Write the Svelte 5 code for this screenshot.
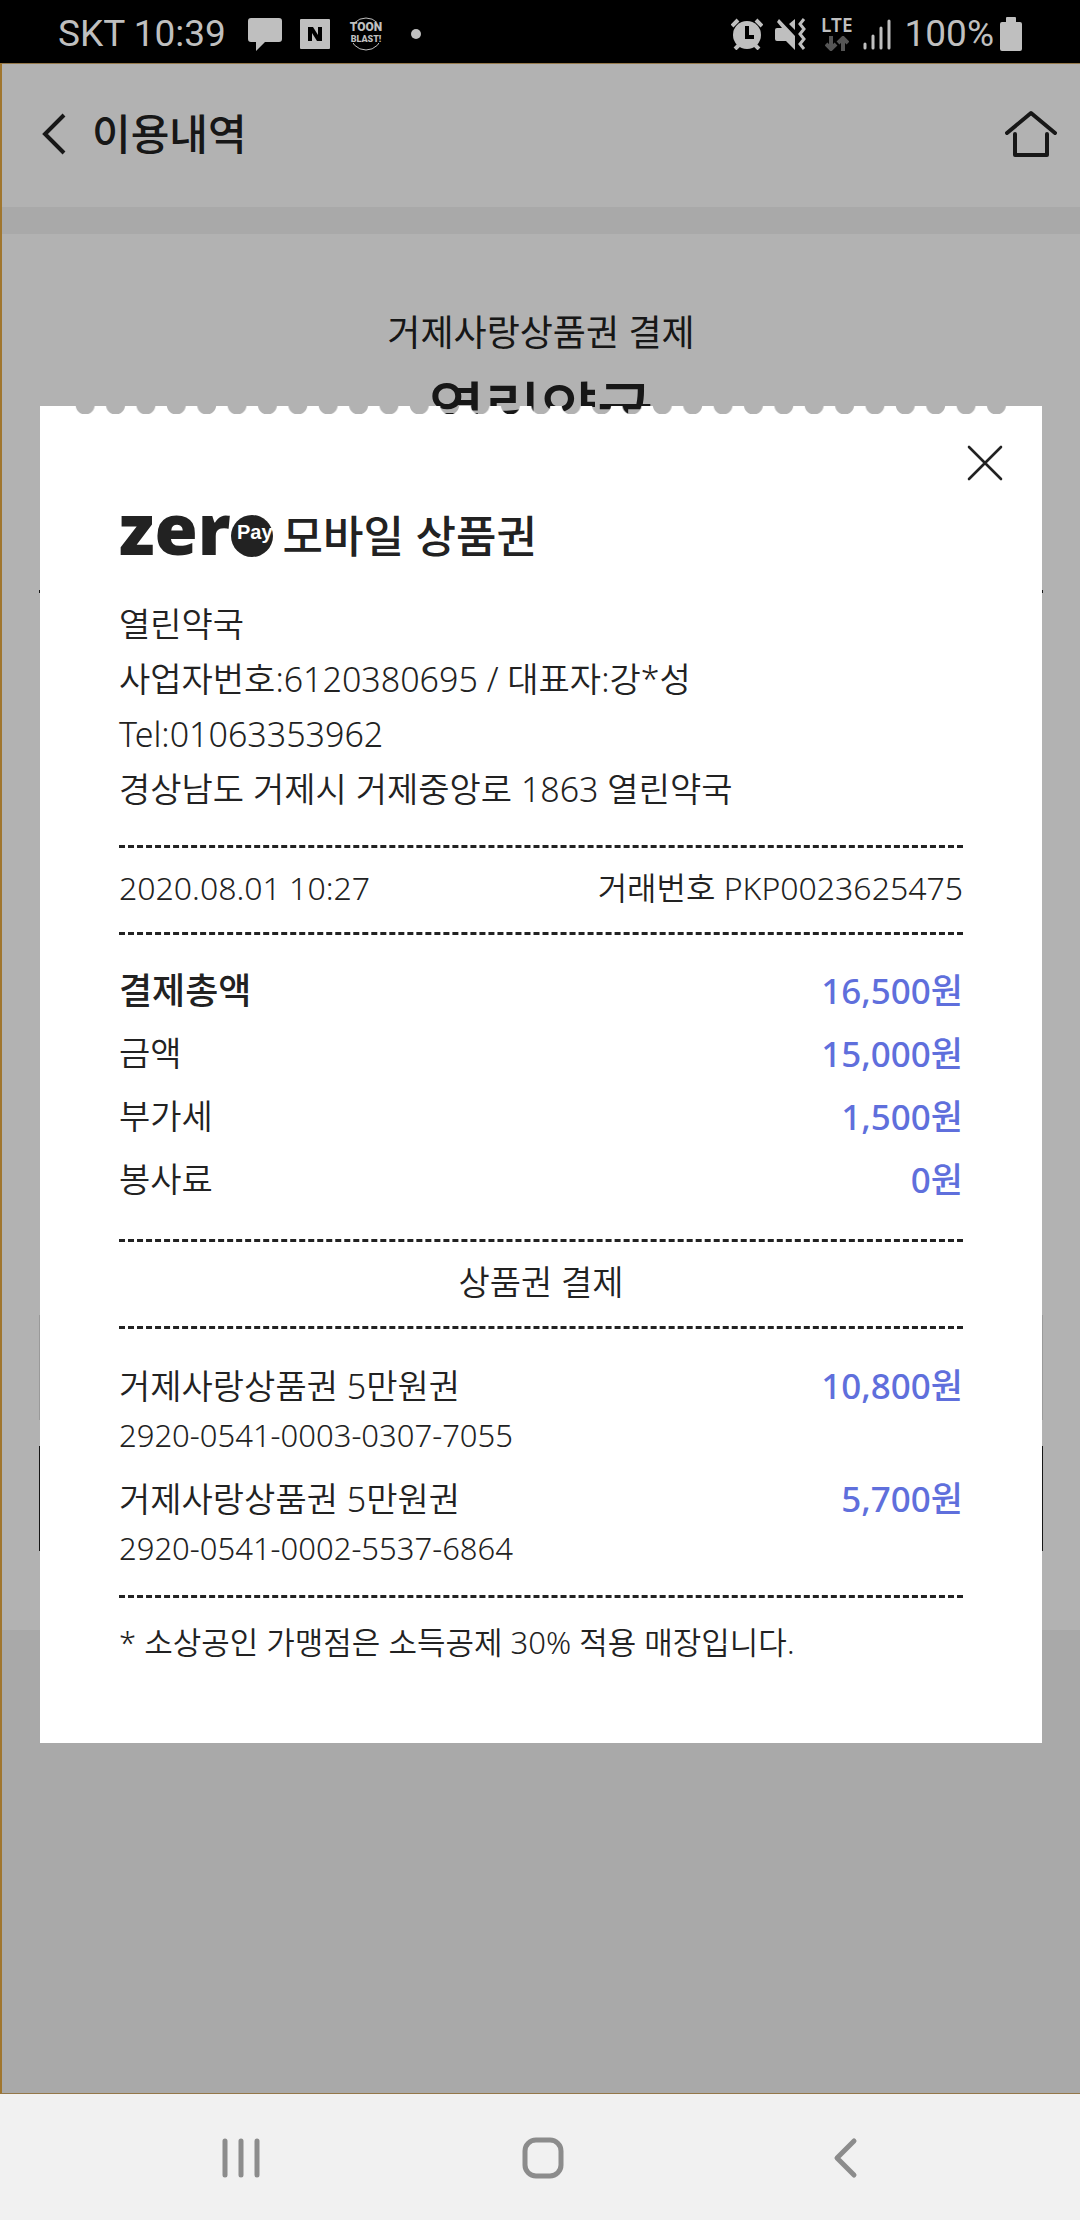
<script lang="ts">
  type Row = { label: string; amount: string; strong?: boolean };
  type Voucher = { name: string; code: string; amount: string };

  const shop = [
    '열린약국',
    '사업자번호:6120380695 / 대표자:강*성',
    'Tel:01063353962',
    '경상남도 거제시 거제중앙로 1863 열린약국'
  ];

  const rows: Row[] = [
    { label: '결제총액', amount: '16,500원', strong: true },
    { label: '금액', amount: '15,000원' },
    { label: '부가세', amount: '1,500원' },
    { label: '봉사료', amount: '0원' }
  ];

  const vouchers: Voucher[] = [
    { name: '거제사랑상품권 5만원권', code: '2920-0541-0003-0307-7055', amount: '10,800원' },
    { name: '거제사랑상품권 5만원권', code: '2920-0541-0002-5537-6864', amount: '5,700원' }
  ];

  let open = $state(true);
</script>

<div class="phone">
  <div class="status">
    <div class="status-side">
      <span class="status-text">SKT 10:39</span>
      <svg class="bubble" width="34" height="34" viewBox="0 0 34 34" aria-hidden="true">
        <path d="M3 1h28a3 3 0 0 1 3 3v18a3 3 0 0 1-3 3H17l-9 9v-9H3a3 3 0 0 1-3-3V4a3 3 0 0 1 3-3z" fill="currentColor" />
      </svg>
      <svg class="note" width="30" height="30" viewBox="0 0 30 30" aria-hidden="true">
        <rect width="30" height="30" rx="1" fill="currentColor" />
        <path d="M8 22V8h5l5 8V8h4v14h-5l-5-8v8z" fill="#000" />
      </svg>
      <svg class="toon" width="36" height="34" viewBox="0 0 36 34" aria-hidden="true">
        <circle cx="18" cy="17" r="16" fill="none" stroke="currentColor" />
        <rect x="0" y="5" width="36" height="21" fill="#000" />
        <text x="18" y="14" text-anchor="middle" font-size="12">TOON</text>
        <text x="18" y="25" text-anchor="middle" font-size="9">BLAST!</text>
      </svg>
      <span class="more"></span>
    </div>
    <div class="status-side">
      <svg width="32" height="32" viewBox="0 0 32 32" aria-hidden="true">
        <g stroke="currentColor" stroke-width="4" fill="none">
          <path d="M1 8l6-6M31 8l-6-6M4 31l5-5M28 31l-5-5" />
        </g>
        <circle cx="16" cy="17" r="14" fill="currentColor" />
        <path d="M16 8v11h7" fill="none" stroke="#000" stroke-width="4" />
      </svg>
      <svg class="mute" width="32" height="32" viewBox="0 0 32 32" aria-hidden="true">
        <path d="M0 12q0-2 2-2h5L2 4l2-3 16 17v14l-9-9H2q-2 0-2-2zM20 1v11l-6-6z" fill="currentColor" />
        <path d="M29 1l-4 5 4 5-4 5 4 5-4 5 4 5" fill="none" stroke="currentColor" stroke-width="3" />
      </svg>
      <span class="lte">
        LTE
        <svg width="24" height="15" viewBox="0 0 24 15" aria-hidden="true">
          <path d="M6 0v12M1 8l5 5 5-5M18 15V3M13 7l5-5 5 5" fill="none" stroke="#555" stroke-width="4" />
        </svg>
      </span>
      <svg class="signal" width="28" height="32" viewBox="0 0 28 32" aria-hidden="true">
        <path d="M2 26v4M10 18v12M18 10v20M26 3v27" stroke="currentColor" stroke-width="3" stroke-linecap="round" />
      </svg>
      <span class="status-text">100%</span>
      <svg class="battery" width="22" height="34" viewBox="0 0 22 34" aria-hidden="true">
        <path d="M7 0h8q1 0 1 1v4h4q2 0 2 2v25q0 2-2 2H2q-2 0-2-2V7q0-2 2-2h4V1q0-1 1-1z" fill="currentColor" />
      </svg>
    </div>
  </div>

  <div class="app">
    <div class="page">
      <header>
        <button type="button" aria-label="뒤로">
          <svg width="24" height="42" viewBox="0 0 24 42" aria-hidden="true">
            <path d="M22 2L3 21l19 19" fill="none" stroke="currentColor" stroke-width="4" />
          </svg>
        </button>
        <h1>이용내역</h1>
        <button type="button" aria-label="홈">
          <svg width="52" height="48" viewBox="0 0 52 48" aria-hidden="true">
            <path d="M2 23L26 3l24 20M10 24v21h32V24" fill="none" stroke="currentColor" stroke-width="4" stroke-linecap="round" stroke-linejoin="round" />
          </svg>
        </button>
      </header>
      <section class="history">
        <p>거제사랑상품권 결제</p>
        <h2>열린약국</h2>
        <div class="detail"></div>
        <div class="box light"></div>
        <div class="box"></div>
      </section>
    </div>

    {#if open}
      <div class="overlay">
        <div class="receipt" role="dialog" aria-modal="true" aria-label="모바일 상품권">
          <div class="edge"><span></span></div>
          <div class="close">
            <button type="button" aria-label="닫기" onclick={() => (open = false)}>
              <svg width="36" height="36" viewBox="0 0 36 36" aria-hidden="true">
                <path d="M2 2l32 32M34 2L2 34" fill="none" stroke="currentColor" stroke-width="2.6" stroke-linecap="round" />
              </svg>
            </button>
          </div>

          <div class="body">
            <h2 class="logo">
              <span class="zer">zer</span>
              <span class="pay">Pay</span>
              <span class="name">모바일 상품권</span>
            </h2>

            <div class="shop">
              {#each shop as line}
                <p>{line}</p>
              {/each}
            </div>

            <div class="strip meta">
              <span>2020.08.01 10:27</span>
              <span>거래번호 PKP0023625475</span>
            </div>

            <dl class="totals">
              {#each rows as row}
                <div class="row">
                  <dt class:strong={row.strong}>{row.label}</dt>
                  <dd>{row.amount}</dd>
                </div>
              {/each}
            </dl>

            <h3 class="strip">상품권 결제</h3>

            <ul class="vouchers">
              {#each vouchers as voucher}
                <li>
                  <div class="row">
                    <span>{voucher.name}</span>
                    <span class="amount">{voucher.amount}</span>
                  </div>
                  <p>{voucher.code}</p>
                </li>
              {/each}
            </ul>

            <p class="notice">* 소상공인 가맹점은 소득공제 30% 적용 매장입니다.</p>
          </div>
        </div>
      </div>
    {/if}
  </div>

  <nav>
    <button type="button" aria-label="최근 앱">
      <svg width="40" height="42" viewBox="0 0 40 42" aria-hidden="true">
        <path d="M4 4v34M20 4v34M36 4v34" stroke="currentColor" stroke-width="5" stroke-linecap="round" />
      </svg>
    </button>
    <button type="button" aria-label="홈 화면">
      <svg width="42" height="42" viewBox="0 0 42 42" aria-hidden="true">
        <rect x="3" y="3" width="36" height="36" rx="11" fill="none" stroke="currentColor" stroke-width="5" />
      </svg>
    </button>
    <button type="button" aria-label="이전">
      <svg width="26" height="42" viewBox="0 0 26 42" aria-hidden="true">
        <path d="M22 4L5 21l17 17" fill="none" stroke="currentColor" stroke-width="5" stroke-linecap="round" stroke-linejoin="round" />
      </svg>
    </button>
  </nav>
</div>

<style>
  :global(body) {
    margin: 0;
  }

  .phone {
    display: flex;
    flex-direction: column;
    min-height: 100vh;
    font-family: "Noto Sans", "Noto Sans CJK KR", sans-serif;
    font-weight: 350;
    color: #222;
  }

  h1, h2, h3, p, dl, dd, ul {
    margin: 0;
    padding: 0;
  }

  ul {
    list-style: none;
  }

  button {
    display: flex;
    padding: 0;
    border: none;
    background: none;
    color: inherit;
    cursor: pointer;
  }

  svg {
    display: block;
    flex-shrink: 0;
  }

  .status {
    display: flex;
    justify-content: space-between;
    box-sizing: border-box;
    height: 63px;
    padding: 4px 58px 0;
    background: #000;
    color: #bfbfbf;
  }

  .status-side {
    display: flex;
    align-items: center;
  }

  .status-text {
    font: 400 37px/60px Roboto, sans-serif;
  }

  .bubble {
    margin-left: 22px;
  }

  .note,
  .toon {
    margin-left: 18px;
  }

  .toon text {
    fill: currentColor;
    font-family: Roboto, sans-serif;
    font-weight: 900;
  }

  .more {
    width: 10px;
    height: 10px;
    margin-left: 27px;
    border-radius: 50%;
    background: currentColor;
  }

  .mute {
    margin-left: 12px;
  }

  .lte {
    display: flex;
    flex-direction: column;
    align-items: center;
    gap: 3px;
    margin-left: 14px;
    font-size: 19px;
    font-weight: 600;
    line-height: 16px;
  }

  .signal {
    margin: 0 14px 0 10px;
  }

  .battery {
    margin-left: 6px;
  }

  .app {
    flex: 1;
    display: grid;
    border: 1px solid #94784a;
    border-width: 1px 0 1px 2px;
    border-left-color: #a0762e;
    background: #f3f3f3;
  }

  .page,
  .overlay {
    grid-area: 1 / 1;
  }

  header {
    display: flex;
    align-items: center;
    height: 139px;
    padding: 0 23px 4px 40px;
    border-bottom: 27px solid #f3f3f3;
    background: #fff;
  }

  h1 {
    flex: 1;
    margin-left: 26px;
    font-size: 42px;
    font-weight: 500;
    line-height: 60px;
  }

  .history {
    display: flex;
    flex-direction: column;
    padding: 74px 37px 79px;
    background: #fff;
    text-align: center;
  }

  .history p {
    font-size: 36px;
    font-weight: 400;
    line-height: 50px;
  }

  .history h2 {
    margin-top: 12px;
    font-size: 61px;
    font-weight: 500;
    line-height: 80px;
  }

  .detail {
    min-height: 722px;
    margin-top: 140px;
    border-top: 3px solid #222;
  }

  .box {
    height: 103px;
    border: 1px solid #222;
  }

  .box.light {
    margin-bottom: 26px;
    border-color: #ddd;
  }

  .overlay {
    padding: 342px 38px 64px;
    background: rgba(0, 0, 0, 0.3);
  }

  .edge {
    display: flex;
    height: 8px;
    padding: 0 30px;
    background: linear-gradient(#fff, #fff) left / 30px 8px no-repeat, linear-gradient(#fff, #fff) right / 30px 8px no-repeat;
  }

  .edge span {
    flex: 1;
    background: #fff;
    -webkit-mask: radial-gradient(circle at 50% -1px, transparent 9px, #000 10px) left top / 30px 8px round;
    mask: radial-gradient(circle at 50% -1px, transparent 9px, #000 10px) left top / 30px 8px round;
  }

  .close {
    display: flex;
    justify-content: flex-end;
    padding: 31px 39px 0;
    background: #fff;
  }

  .body {
    padding: 12px 79px 78px;
    background: #fff;
  }

  .logo {
    display: flex;
    align-items: flex-end;
    line-height: 70px;
  }

  .zer {
    font-family: "Open Sans", sans-serif;
    font-size: 70px;
    font-weight: 800;
  }

  .pay {
    width: 42px;
    height: 42px;
    margin-bottom: 6px;
    border-radius: 50%;
    background: #222;
    color: #fff;
    font: 700 20px/34px "Liberation Sans", sans-serif;
    text-align: right;
  }

  .name {
    margin-left: 10px;
    font-size: 44px;
    font-weight: 500;
    line-height: 54px;
  }

  .shop {
    padding: 34px 0 28px;
    font-size: 34px;
    line-height: 55px;
  }

  .strip {
    padding-bottom: 4px;
    border: 3px dashed #222;
    border-width: 3px 0;
    font-size: 34px;
    font-weight: 350;
    line-height: 80px;
    text-align: center;
  }

  .meta {
    display: flex;
    justify-content: space-between;
    font-size: 32px;
  }

  .row {
    display: flex;
    justify-content: space-between;
    font-size: 34px;
  }

  .totals {
    padding: 24px 0 28px;
    line-height: 63px;
  }

  .strong {
    font-size: 36px;
    font-weight: 500;
  }

  dd,
  .amount {
    color: #5f6fdc;
    font-size: 35px;
    font-weight: 500;
  }

  .vouchers {
    display: flex;
    flex-direction: column;
    gap: 15px;
    padding: 32px 0 23px;
    border-bottom: 3px dashed #222;
    line-height: 50px;
  }

  .vouchers p {
    font-size: 31px;
    line-height: 48px;
  }

  .notice {
    padding-top: 21px;
    font-size: 31px;
    line-height: 46px;
  }

  nav {
    display: grid;
    grid-template-columns: repeat(3, 1fr);
    align-items: center;
    justify-items: center;
    height: 126px;
    padding: 2px 84px 0 90px;
    box-sizing: border-box;
    background: #f1f1f1;
    color: #8c8c8c;
  }
</style>
